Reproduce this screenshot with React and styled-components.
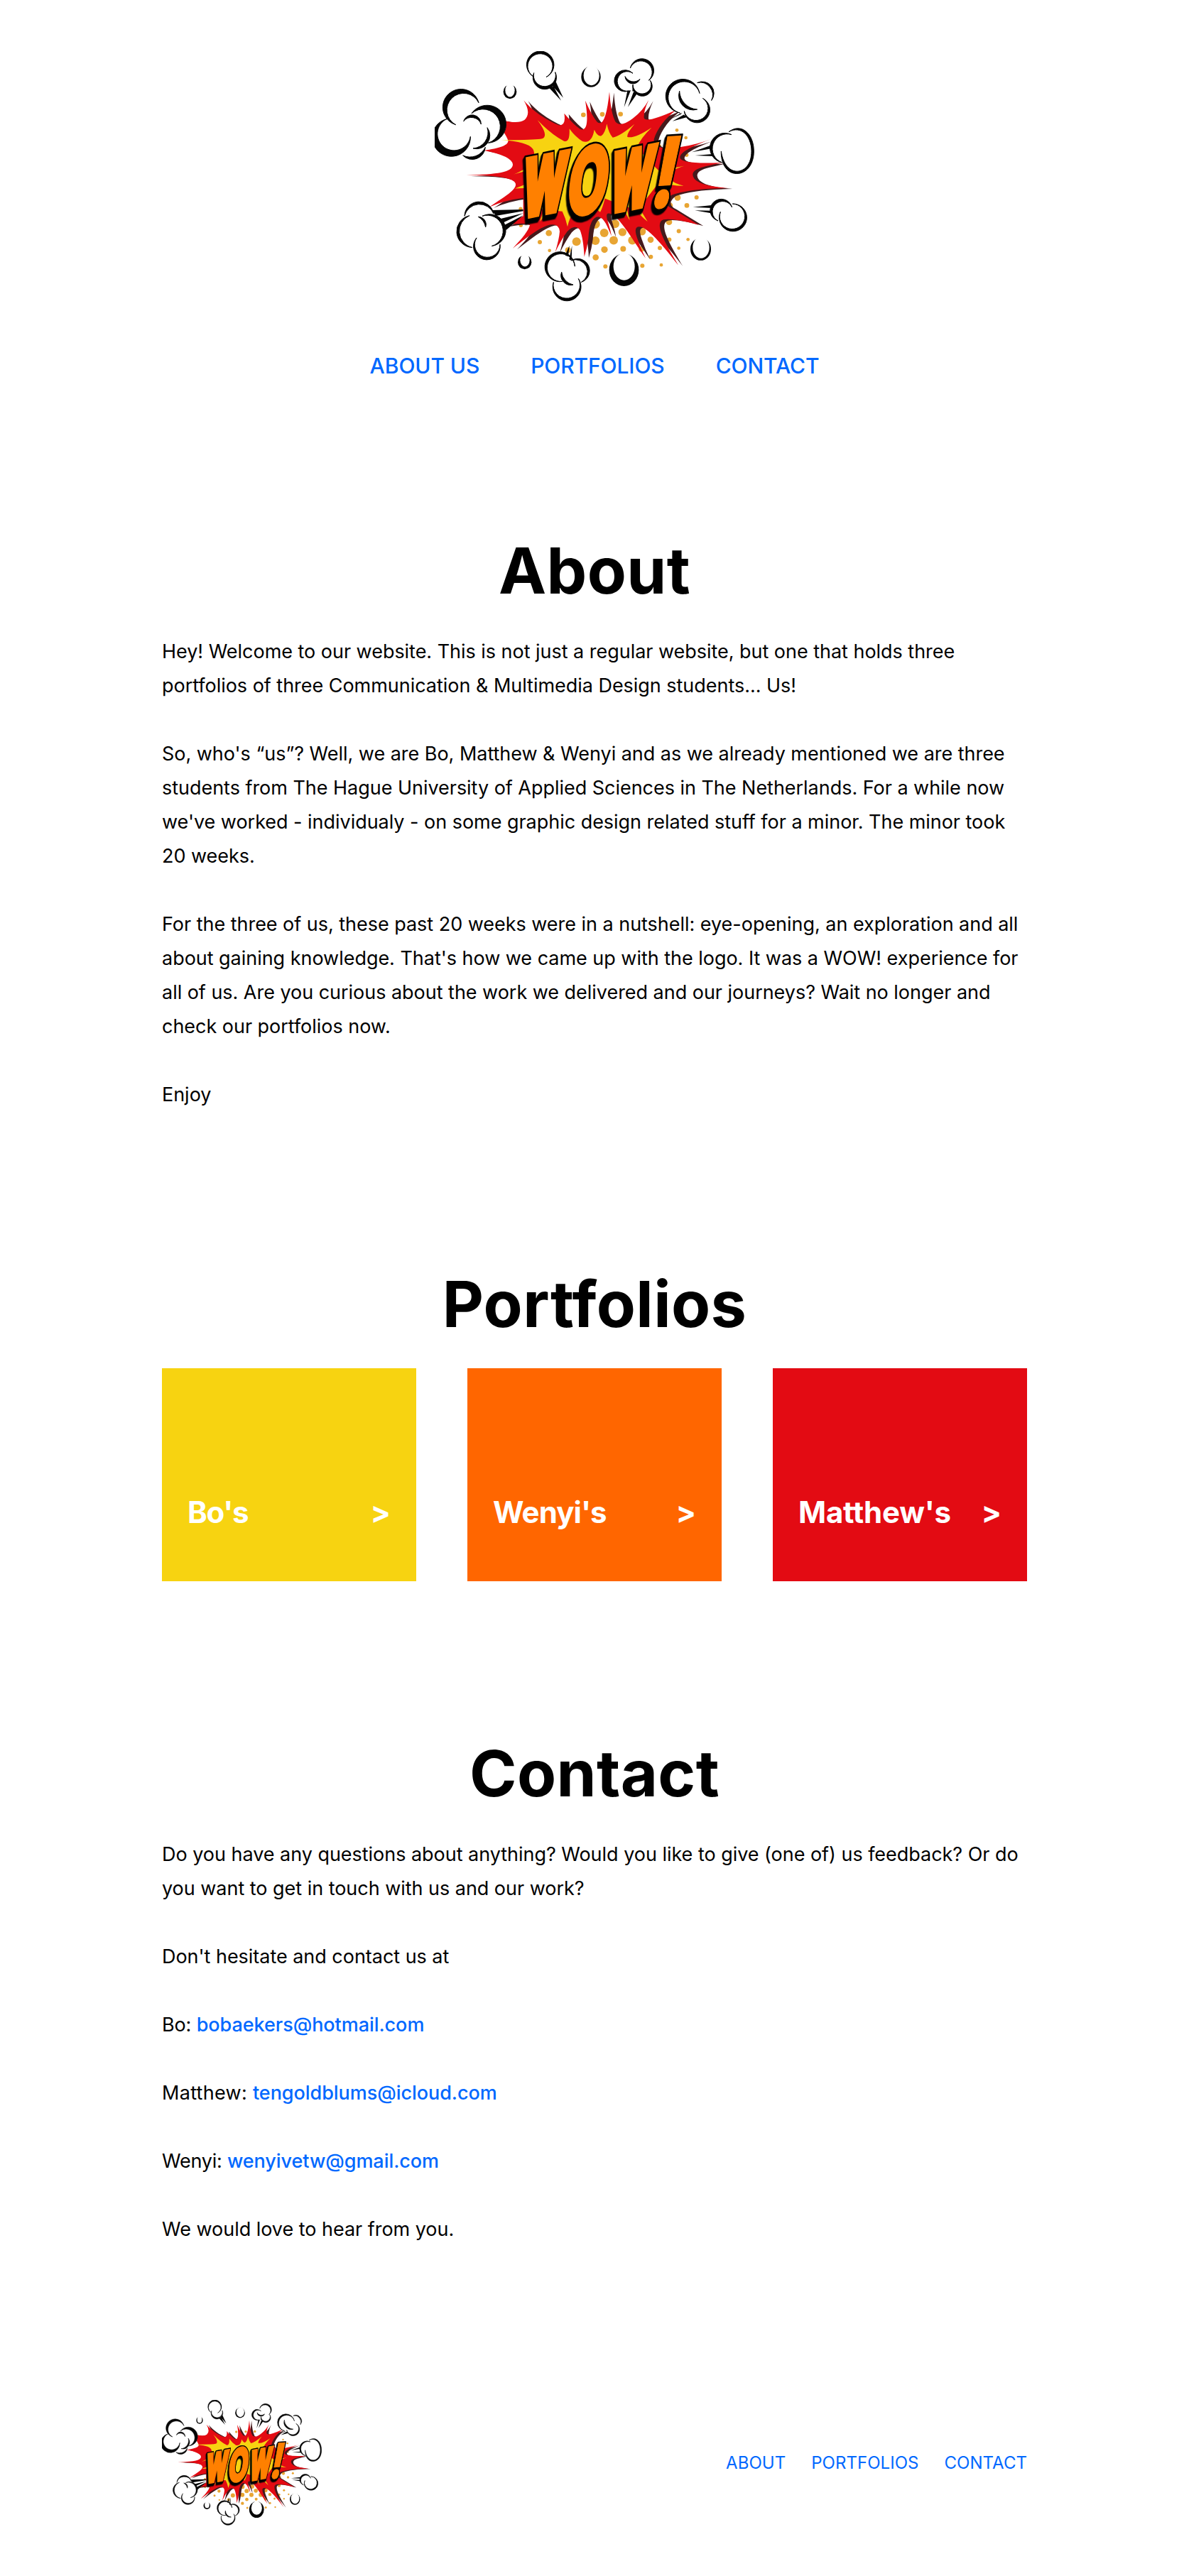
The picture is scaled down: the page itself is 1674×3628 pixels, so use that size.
import React from "react";
import styled, { createGlobalStyle } from "styled-components";

const GlobalStyle = createGlobalStyle`
  * { box-sizing: border-box; }
  body {
    margin: 0;
    background: #fff;
    color: #000;
    font-family: Inter, sans-serif;
  }
`;

const Page = styled.div`
  width: 1218px;
  margin: 0 auto;
  padding: 72px 0 71px;
  display: flex;
  flex-direction: column;
  gap: 216px;
`;

const Header = styled.header`
  display: flex;
  flex-direction: column;
  align-items: center;
  gap: 72px;
`;

const Nav = styled.nav`
  display: flex;
  gap: ${(p) => (p.$small ? 36 : 72)}px;
`;

const NavLink = styled.a`
  color: #0068ff;
  text-decoration: none;
  text-transform: uppercase;
  font-weight: ${(p) => (p.$small ? 400 : 500)};
  font-size: ${(p) => (p.$small ? 24 : 30)}px;
  line-height: ${(p) => (p.$small ? 30 : 36)}px;
  letter-spacing: ${(p) => (p.$small ? 0.04 : -0.1)}px;
`;

const Section = styled.section`
  display: flex;
  flex-direction: column;
  gap: 36px;
`;

const Title = styled.h1`
  margin: 0;
  text-align: center;
  font-size: 90px;
  font-weight: 700;
  line-height: 109px;
  letter-spacing: 0.4px;
`;

const Copy = styled.div`
  display: flex;
  flex-direction: column;
  gap: 48px;
`;

const Text = styled.p`
  margin: 0;
  font-size: 27px;
  font-weight: 400;
  line-height: 48px;
  letter-spacing: -0.03px;
`;

const Mail = styled.a`
  color: #0068ff;
  text-decoration: none;
  font-weight: 500;
  letter-spacing: -0.05px;
`;

const Name = styled.span`
  letter-spacing: ${(p) => p.$tracking}px;
`;

const Cards = styled.div`
  display: grid;
  grid-template-columns: repeat(3, 1fr);
  gap: 72px;
`;

const Card = styled.a`
  display: flex;
  justify-content: space-between;
  align-items: flex-end;
  height: 300px;
  padding: 0 36px 72px;
  background: ${(p) => p.$color};
  color: #fff;
  text-decoration: none;
  font-size: 42px;
  font-weight: 700;
  line-height: 50px;
`;

const Footer = styled.footer`
  display: flex;
  justify-content: space-between;
  align-items: center;
`;

const LogoSvg = styled.svg`
  display: block;
  width: ${(p) => p.$width}px;
  height: ${(p) => p.$height}px;
`;

/* Each arc: [x1, y1, x2, y2, height, thickness], drawn clockwise. */
const bulge = ([x1, y1, x2, y2], h) => {
  const half = Math.hypot(x2 - x1, y2 - y1) / 2;
  return { r: (h * h + half * half) / (2 * h), large: h > half ? 1 : 0 };
};

const crescent = (arc) => {
  const [x1, y1, x2, y2, h, t] = arc;
  const o = bulge(arc, h);
  const i = bulge(arc, h - t);
  return `M${x1} ${y1}A${o.r} ${o.r} 0 ${o.large} 1 ${x2} ${y2}A${i.r} ${i.r} 0 ${i.large} 0 ${x1} ${y1}Z`;
};

const lobe = (arc) => {
  const o = bulge(arc, arc[4]);
  return `M${arc[0]} ${arc[1]}A${o.r} ${o.r} 0 ${o.large} 1 ${arc[2]} ${arc[3]}Z`;
};

const puffs = [
  {
    arcs: [
      [125, 348, 222, 255, 115, 22],
      [192, 300, 262, 425, 115, 27],
      [250, 443, 155, 478, 33, 12],
      [187, 398, 88, 323, 132, 29],
      [158, 333, 232, 346, 33, 11],
      [258, 360, 198, 448, 38, 12],
    ],
  },
  {
    arcs: [[450, 142, 507, 146, 108, 11], [545, 125, 455, 128, 71, 12]],
    trails: "M518 190L570 246L538 186ZM533 183L579 234L548 166Z",
  },
  {
    arcs: [
      [862, 108, 940, 160, 69, 11],
      [946, 160, 873, 178, 58, 10],
      [855, 205, 873, 130, 70, 13],
      [903, 155, 840, 143, 25, 9],
    ],
    trails: "M850 204L836 274L864 202ZM876 208L852 273L892 214ZM873 176L871 206L879 206Z",
  },
  {
    arcs: [
      [1072, 298, 1155, 215, 114, 13],
      [1145, 170, 1205, 245, 38, 8],
      [1168, 236, 1090, 290, 81, 11],
      [1145, 283, 1070, 205, 33, 12],
    ],
    trails: "M1080 297L1018 330L1076 304ZM1040 333L1102 316L1088 305Z",
  },
  {
    arcs: [[1250, 508, 1290, 390, 72, 11]],
    base: "M1278 378C1330 340 1384 390 1384 460C1384 520 1350 554 1312 554C1265 554 1246 505 1246 460Z",
    ink: "M1278 378C1330 338 1384 385 1384 460C1384 520 1350 555 1312 555C1265 555 1244 505 1246 460C1252 505 1275 544 1312 545C1345 545 1374 515 1374 460C1374 395 1330 350 1278 378Z",
    trails: "M1122 464L1204 435L1204 449ZM1136 478L1208 472L1212 481Z",
  },
  {
    arcs: [[1294, 683, 1243, 717, 108, 11], [1233, 755, 1292, 698, 70, 12]],
    trails: "M1127 697L1206 689L1206 701ZM1135 711L1206 712L1212 724Z",
  },
  {
    arcs: [
      [162, 735, 285, 725, 56, 11],
      [237, 735, 277, 862, 80, 12],
      [312, 855, 213, 827, 80, 11],
      [195, 868, 183, 733, 60, 11],
      [220, 738, 251, 782, 14, 8],
    ],
    trails: "M278 710L410 707L410 714L294 734ZM312 747L410 723L322 764ZM330 773L410 732L338 794Z",
  },
  {
    arcs: [
      [575, 1012, 628, 948, 111, 11],
      [613, 923, 655, 1015, 57, 10],
      [643, 1000, 538, 1015, 87, 11],
      [621, 1026, 572, 972, 22, 10],
    ],
    trails: "M587 902L605 860L600 906ZM604 918L616 860L614 924Z",
  },
];

/* Loose puffs: outer ellipse, then the hollow that opens it at the top. */
const rings = [
  [354, 208, 28, 30, 354, 202, 20, 28],
  [696, 145, 41, 44, 698, 139, 33, 42],
  [1159.5, 875, 43.5, 48, 1161, 868, 35, 46],
  [835.5, 963, 62.5, 69, 836, 949, 45, 58],
  [416, 930, 29, 30, 417, 922, 20, 27],
];

const dots = [
  [664, 306, 10], [744, 304, 10], [821, 303, 10], [1059, 371, 7], [1097, 403, 7], [982, 442, 12],
  [1100, 476, 8], [399, 704, 8], [400, 774, 8], [518, 807, 13], [480, 845, 9], [521, 881, 7],
  [599, 879, 12], [635, 843, 18], [715, 769, 19], [798, 768, 18], [752, 806, 18], [829, 803, 17],
  [911, 800, 17], [715, 839, 18], [792, 838, 18], [871, 838, 18], [948, 835, 13], [1027, 835, 9],
  [1106, 834, 7], [1026, 760, 13], [1067, 799, 9], [753, 877, 14], [832, 874, 12], [910, 874, 12],
  [987, 870, 9], [1067, 871, 7], [716, 910, 13], [949, 908, 9], [757, 948, 9], [913, 945, 9],
  [993, 942, 7], [1062, 657, 13], [1142, 656, 9], [1101, 690, 10], [1026, 691, 16],
];

const burst =
  "M412 244C450 290 510 330 560 350Q592 352 583 300Q625 350 650 366Q694 384 672 246Q700 310 722 336Q758 366 774 208Q780 300 800 336Q822 360 872 322Q915 290 940 243Q918 290 920 318Q924 345 1057 285C1010 320 975 365 962 410Q960 460 1075 442Q1150 430 1205 408C1130 438 1072 460 1072 488Q1080 516 1250 508C1180 525 1126 530 1126 560Q1130 606 1275 616Q1110 618 1036 646Q990 680 1040 704Q1090 735 1152 773Q1040 742 1002 750C960 765 1010 850 1065 943C1000 860 950 800 912 782Q870 770 892 830Q905 870 927 914C880 850 850 790 800 738Q748 700 768 760Q778 790 783 820C765 780 755 745 727 738Q690 740 685 830Q680 870 668 908Q664 830 650 795Q630 765 596 800Q570 835 545 888Q562 830 564 800Q560 760 510 775C460 795 410 840 365 872C410 826 432 795 438 774Q420 758 330 776L410 735L410 658Q330 668 266 697C320 660 374 630 378 604Q384 562 170 562C300 558 366 550 366 516Q362 480 245 457C310 448 350 435 346 414Q340 398 325 375L325 330Q390 345 415 328Q446 300 412 244Z";

const flare =
  "M315 412Q455 414 490 407Q520 395 470 328Q530 390 582 417Q608 426 605 365Q630 400 660 418Q700 430 710 369Q725 400 740 395Q756 382 763 344Q772 385 788 402Q820 396 880 345Q846 385 850 400Q880 408 952 360Q905 405 890 445L960 520L985 545Q1020 535 1090 523Q1035 538 1030 560Q1020 590 1088 607Q1030 606 985 590L900 700L935 758Q905 735 890 710L845 695L860 753Q840 720 830 690L755 660Q745 700 735 718Q715 700 700 690L625 715Q605 740 597 780Q590 745 575 715L520 710L480 758L495 715L450 615L375 618L420 600L415 545L370 558C440 535 470 480 450 450Q430 420 315 412Z";

/* Letters sit on a rising baseline, each with its own slant. */
const letters = [
  { ch: "W", m: "1 -0.2 -0.1 1 398 742", w: 186, size: 338, fat: 22 },
  { ch: "O", m: "1 -0.18 -0.12 1 584 742", w: 172, size: 398, fat: 10 },
  { ch: "W", m: "1 -0.2 -0.13 1 764 722", w: 184, size: 348, fat: 22 },
  { ch: "!", m: "1 -0.06 -0.2 1 936 702", w: 104, size: 414, fat: 4 },
];

const Letter = styled.text`
  font-family: Inter, sans-serif;
  font-weight: 900;
  font-size: ${(p) => p.$size}px;
  stroke-linejoin: miter;
  stroke-miterlimit: 3;
`;

const LetterGroup = styled.g`
  ${(p) =>
    p.$shade &&
    "filter: drop-shadow(-1px 3px 0 #000) drop-shadow(-2px 5px 0 #000) drop-shadow(-5px 10px 0 #000);"}
`;

const Lettering = ({ shade }) => (
  <LetterGroup $shade={shade} aria-hidden={shade}>
    {letters.map(({ ch, m, w, size, fat }, i) => (
      <g key={i} transform={`matrix(${m})`}>
        <Letter
          $size={size}
          textLength={w}
          lengthAdjust="spacingAndGlyphs"
          fill={shade ? "#000" : "#ff8000"}
          stroke={shade ? "#000" : "#ff8000"}
          strokeWidth={shade ? fat + 16 : fat}
        >
          {ch}
        </Letter>
      </g>
    ))}
  </LetterGroup>
);

const Logo = ({ width, height }) => (
  <LogoSvg $width={width} $height={height} viewBox="36 36 1350 1062" preserveAspectRatio="none">
    <g fill="#e8a533">
      {dots.map(([x, y, r]) => (
        <circle key={`${x}-${y}`} cx={x} cy={y} r={r} />
      ))}
    </g>
    <path d={burst} fill="#451a1c" transform="translate(19 4)" />
    <path d={burst} fill="#e30b13" />
    <path d={flare} fill="#f7d311" />
    {rings.map(([cx, cy, rx, ry, ix, iy, irx, iry]) => (
      <g key={cx}>
        <ellipse cx={cx} cy={cy} rx={rx} ry={ry} fill="#050505" />
        <ellipse cx={ix} cy={iy} rx={irx} ry={iry} fill="#fff" />
      </g>
    ))}
    {puffs.map(({ arcs, base, ink, trails }, i) => (
      <g key={i}>
        <path d={`${arcs.map(lobe).join("")}${base || ""}`} fill="#fff" />
        <polygon points={arcs.flatMap((a) => [`${a[0]},${a[1]}`, `${a[2]},${a[3]}`]).join(" ")} fill="#fff" />
        <path d={trails || ""} fill="#050505" />
        <path
          d={`${arcs.map(crescent).join("")}${ink || ""}`}
          fill="#050505"
          stroke="#050505"
          strokeWidth="3"
          strokeLinejoin="round"
        />
      </g>
    ))}
    <Lettering shade />
    <Lettering />
  </LogoSvg>
);

const people = [
  { name: "Bo", color: "#f7d311", mail: "bobaekers@hotmail.com", tracking: -0.15, label: -1.2 },
  { name: "Wenyi", color: "#ff6600", mail: "wenyivetw@gmail.com", tracking: -0.25, label: -0.9 },
  { name: "Matthew", color: "#e30b13", mail: "tengoldblums@icloud.com", tracking: 0.3, label: -0.2 },
];

export default function App() {
  const [bo, wenyi, matthew] = people;
  return (
    <>
      <GlobalStyle />
      <Page>
        <Header>
          <Logo width={450} height={353} />
          <Nav>
            <NavLink href="#about">About us</NavLink>
            <NavLink href="#portfolios">Portfolios</NavLink>
            <NavLink href="#contact">Contact</NavLink>
          </Nav>
        </Header>

        <Section id="about">
          <Title>About</Title>
          <Copy>
            <Text>
              Hey! Welcome to our website. This is not just a regular website, but one that holds three
              portfolios of three Communication &amp; Multimedia Design students... Us!
            </Text>
            <Text>
              So, who's “us”? Well, we are Bo, Matthew &amp; Wenyi and as we already mentioned we are three
              students from The Hague University of Applied Sciences in The Netherlands. For a while now
              we've worked - individualy - on some graphic design related stuff for a minor. The minor took
              20 weeks.
            </Text>
            <Text>
              For the three of us, these past 20 weeks were in a nutshell: eye-opening, an exploration and all
              about gaining knowledge. That's how we came up with the logo. It was a WOW! experience for
              all of us. Are you curious about the work we delivered and our journeys? Wait no longer and
              check our portfolios now.
            </Text>
            <Text>Enjoy</Text>
          </Copy>
        </Section>

        <Section id="portfolios">
          <Title>Portfolios</Title>
          <Cards>
            {people.map(({ name, color, label }) => (
              <Card key={name} href={`#${name}`} $color={color}>
                <Name $tracking={label}>{name}'s</Name>
                <span>&gt;</span>
              </Card>
            ))}
          </Cards>
        </Section>

        <Section id="contact">
          <Title>Contact</Title>
          <Copy>
            <Text>
              Do you have any questions about anything? Would you like to give (one of) us feedback? Or do
              you want to get in touch with us and our work?
            </Text>
            <Text>Don't hesitate and contact us at</Text>
            {[bo, matthew, wenyi].map(({ name, mail, tracking }) => (
              <Text key={name}>
                <Name $tracking={tracking}>{name}: </Name>
                <Mail href={`mailto:${mail}`}>{mail}</Mail>
              </Text>
            ))}
            <Text>We would love to hear from you.</Text>
          </Copy>
        </Section>

        <Footer>
          <Logo width={225} height={177} />
          <Nav $small>
            <NavLink $small href="#about">About</NavLink>
            <NavLink $small href="#portfolios">Portfolios</NavLink>
            <NavLink $small href="#contact">Contact</NavLink>
          </Nav>
        </Footer>
      </Page>
    </>
  );
}
